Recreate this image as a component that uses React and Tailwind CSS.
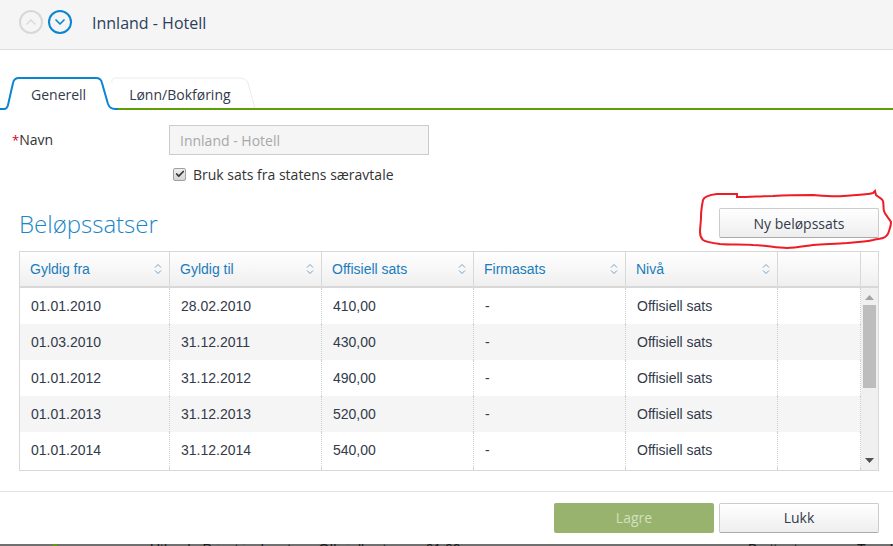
import { Check, ChevronDown, ChevronUp } from "lucide-react";

const COLUMNS = ["Gyldig fra", "Gyldig til", "Offisiell sats", "Firmasats", "Nivå"];

const ROWS = [
  ["01.01.2010", "28.02.2010", "410,00"],
  ["01.03.2010", "31.12.2011", "430,00"],
  ["01.01.2012", "31.12.2012", "490,00"],
  ["01.01.2013", "31.12.2013", "520,00"],
  ["01.01.2014", "31.12.2014", "540,00"],
];

const GRID = "grid grid-cols-[150px_152px_152px_152px_152px_83px]";

function SortIcon() {
  return (
    <svg width="10" height="14" viewBox="0 0 10 14" fill="none" stroke="#6ba3cc" strokeWidth="1" aria-hidden="true">
      <path d="M2 5.5 5 2.5l3 3" />
      <path d="M2 8.5 5 11.5l3-3" />
    </svg>
  );
}

function RedCircle() {
  return (
    <svg className="absolute left-0 top-0 pointer-events-none" width="893" height="546" fill="none" aria-hidden="true">
      <path
        d="M703 200 C704 197 708 195 717 194 L737 194 L737 197 C750 197 762 196 773 196 C790 195 800 195 813 195 C825 196 835 197 843 196 C855 195 866 195 873 193 L875 191 L876 195 C879 198 882 198 883 201 C884 205 883 208 884 211 C885 215 889 218 891 222 C891 226 890 228 889 231 C888 235 886 237 883 238 C880 239 876 239 873 240 C865 242 856 242 847 243 C835 244 825 244 813 245 C805 246 796 248 787 248 C776 248 765 245 753 245 C742 244 731 245 720 244 C712 243 706 242 703 240 C700 237 700 235 700 232 C700 227 701 222 701 217 C701 211 702 205 703 200 Z"
        stroke="#ee1c25"
        strokeWidth="2"
      />
    </svg>
  );
}

export default function App() {
  return (
    <div className="relative w-[893px] h-[546px] overflow-hidden flex flex-col bg-white font-['Open_Sans',sans-serif] text-[#333333]">
      <header className="h-[50px] shrink-0 flex items-center bg-[#f5f5f5] border-b border-[#dddddd] pl-[19px] pb-[3px]">
        <span className="-mt-[2px] w-6 h-6 rounded-full border-2 border-[#d8d8d8] grid place-items-center text-[#d8d8d8]">
          <ChevronUp size={16} strokeWidth={2} />
        </span>
        <span className="-mt-[2px] ml-[5px] w-6 h-6 rounded-full border-2 border-[#0a85d1] grid place-items-center text-[#0a85d1]">
          <ChevronDown size={16} strokeWidth={2.5} />
        </span>
        <h1 className="ml-[20px] text-[16px] text-[#2c3e5c]">Innland - Hotell</h1>
      </header>

      <nav className="relative mt-[27px] h-[33px] shrink-0 flex text-[14px]">
        <svg className="absolute left-0 top-0" width="893" height="33" fill="none" aria-hidden="true">
          <path d="M112 6 Q111 1 116 1 L240 1 Q246 1 248 6 L255 31" stroke="#e6edf2" strokeWidth="1" />
          <path d="M117 32 L893 32" stroke="#5f9e05" strokeWidth="2" />
          <path d="M0 32 L4 32 Q7 32 8 28 L13 6 Q14 1 19 1 L96 1 Q101 1 102 6 L108 27 Q110 32 115 32 L118 32" stroke="#0a85d1" strokeWidth="2" />
        </svg>
        <span className="relative ml-[31px] mt-[7px] text-[#333a4a]">Generell</span>
        <span className="relative ml-[43px] mt-[7px] text-[#333a4a]">Lønn/Bokføring</span>
      </nav>

      <div className="mt-[15px] flex items-center h-[30px] shrink-0 pl-[12px]">
        <label className="w-[157px] text-[14px] -mt-[1px]"><span className="text-[13px] text-[#d0021b]">*</span>Navn</label>
        <div className="w-[260px] h-[30px] border border-[#cccccc] bg-[#f5f5f5] px-[10px] text-[14px] leading-[29px] text-[#a8a8a8]">
          Innland - Hotell
        </div>
      </div>

      <div className="mt-[11px] flex items-center h-[16px] shrink-0 pl-[173px]">
        <span className="w-[13px] h-[13px] rounded-[2px] border border-[#a0a0a0] bg-gradient-to-b from-[#efefef] to-[#d4d4d4] grid place-items-center text-[#333333]">
          <Check size={10} strokeWidth={4} />
        </span>
        <span className="ml-[7px] text-[14px]">Bruk sats fra statens særavtale</span>
      </div>

      <div className="mt-[26px] flex items-start justify-between h-[43px] shrink-0 pl-[19px] pr-[14px]">
        <h2 className="text-[24px] leading-[33px] -mt-[1px] font-light text-[#1a86c8]">Beløpssatser</h2>
        <button className="w-[160px] h-[30px] rounded-[2px] border border-[#cccccc] border-b-[#aaaaaa] bg-gradient-to-b from-white to-[#eeeeee] text-[14px] text-[#333a4a]">
          Ny beløpssats
        </button>
      </div>

      <section className="ml-[19px] w-[860px] h-[220px] shrink-0 border border-[#d8d8d8] font-['Liberation_Sans',sans-serif] text-[14px]">
        <div className="flex h-[36px] border-b-2 border-[#d8d8d8] bg-gradient-to-b from-white to-[#efefef]">
          <div className={GRID}>
            {COLUMNS.map((name) => (
              <div key={name} className="flex items-center justify-between pl-[10px] pr-[6px] border-r border-[#d8d8d8] text-[#1a7cbd]">
                {name}
                <SortIcon />
              </div>
            ))}
            <div className="border-r border-[#d8d8d8]" />
          </div>
        </div>
        <div className="relative h-[182px] overflow-hidden">
          {ROWS.map((row, i) => (
            <div key={row[0]} className={`${GRID} h-[36px] ${i % 2 === 1 ? "bg-[#f5f5f5]" : "bg-white"} text-[#333a4a]`}>
              <div className="flex items-center pl-[11px] border-r border-dotted border-[#cfcfcf]">{row[0]}</div>
              <div className="flex items-center pl-[11px] border-r border-dotted border-[#cfcfcf]">{row[1]}</div>
              <div className="flex items-center pl-[11px] border-r border-dotted border-[#cfcfcf]">{row[2]}</div>
              <div className="flex items-center pl-[11px] border-r border-dotted border-[#cfcfcf]">-</div>
              <div className="flex items-center pl-[11px] border-r border-dotted border-[#cfcfcf]">Offisiell sats</div>
              <div className="border-r border-dotted border-[#cfcfcf]" />
            </div>
          ))}
          <div className={`${GRID} h-[2px]`}>
            <div className="border-r border-dotted border-[#cfcfcf]" />
            <div className="border-r border-dotted border-[#cfcfcf]" />
            <div className="border-r border-dotted border-[#cfcfcf]" />
            <div className="border-r border-dotted border-[#cfcfcf]" />
            <div className="border-r border-dotted border-[#cfcfcf]" />
            <div className="border-r border-dotted border-[#cfcfcf]" />
          </div>
          <div className="absolute right-0 top-0 bottom-0 w-[17px] bg-[#f0f0f0] flex flex-col items-center">
            <svg className="mt-[7px]" width="9" height="5" viewBox="0 0 9 5" aria-hidden="true">
              <path d="M4.5 0 9 5H0z" fill="#a3a3a3" />
            </svg>
            <div className="mt-[5px] w-[13px] h-[83px] bg-[#bdbdbd]" />
            <svg className="mt-auto mb-[7px]" width="9" height="5" viewBox="0 0 9 5" aria-hidden="true">
              <path d="M0 0h9L4.5 5z" fill="#505050" />
            </svg>
          </div>
        </div>
      </section>

      <footer className="mt-[20px] flex-1 flex justify-end items-start gap-[5px] border-t border-[#e3e3e3] pt-[11px] pr-[14px] text-[14px] leading-[26px]">
        <button className="w-[160px] h-[30px] rounded-[2px] bg-[#97b36d] text-[#d3e0be]">Lagre</button>
        <button className="w-[160px] h-[30px] rounded-[2px] border border-[#cccccc] border-b-[#aaaaaa] bg-gradient-to-b from-white to-[#eeeeee] text-[#333a4a]">
          Lukk
        </button>
      </footer>

      <div className="relative h-[2px] shrink-0 overflow-hidden bg-[#707070] flex font-['Liberation_Sans',sans-serif] text-[14px] leading-[11px] text-[#1a1a1a] whitespace-nowrap">
        <span className="ml-[53px] mt-0 w-[4px] h-[2px] bg-[#5f9e05]" />
        <span className="ml-[93px] w-[53px]">Utland</span>
        <span className="w-[117px]">Privat innkvarte...</span>
        <span className="w-[108px]">Offisiell sats</span>
        <span className="w-[325px]">01,00</span>
        <span className="w-[110px]">Brettøutens...</span>
        <span>Trend</span>
      </div>

      <RedCircle />
    </div>
  );
}
